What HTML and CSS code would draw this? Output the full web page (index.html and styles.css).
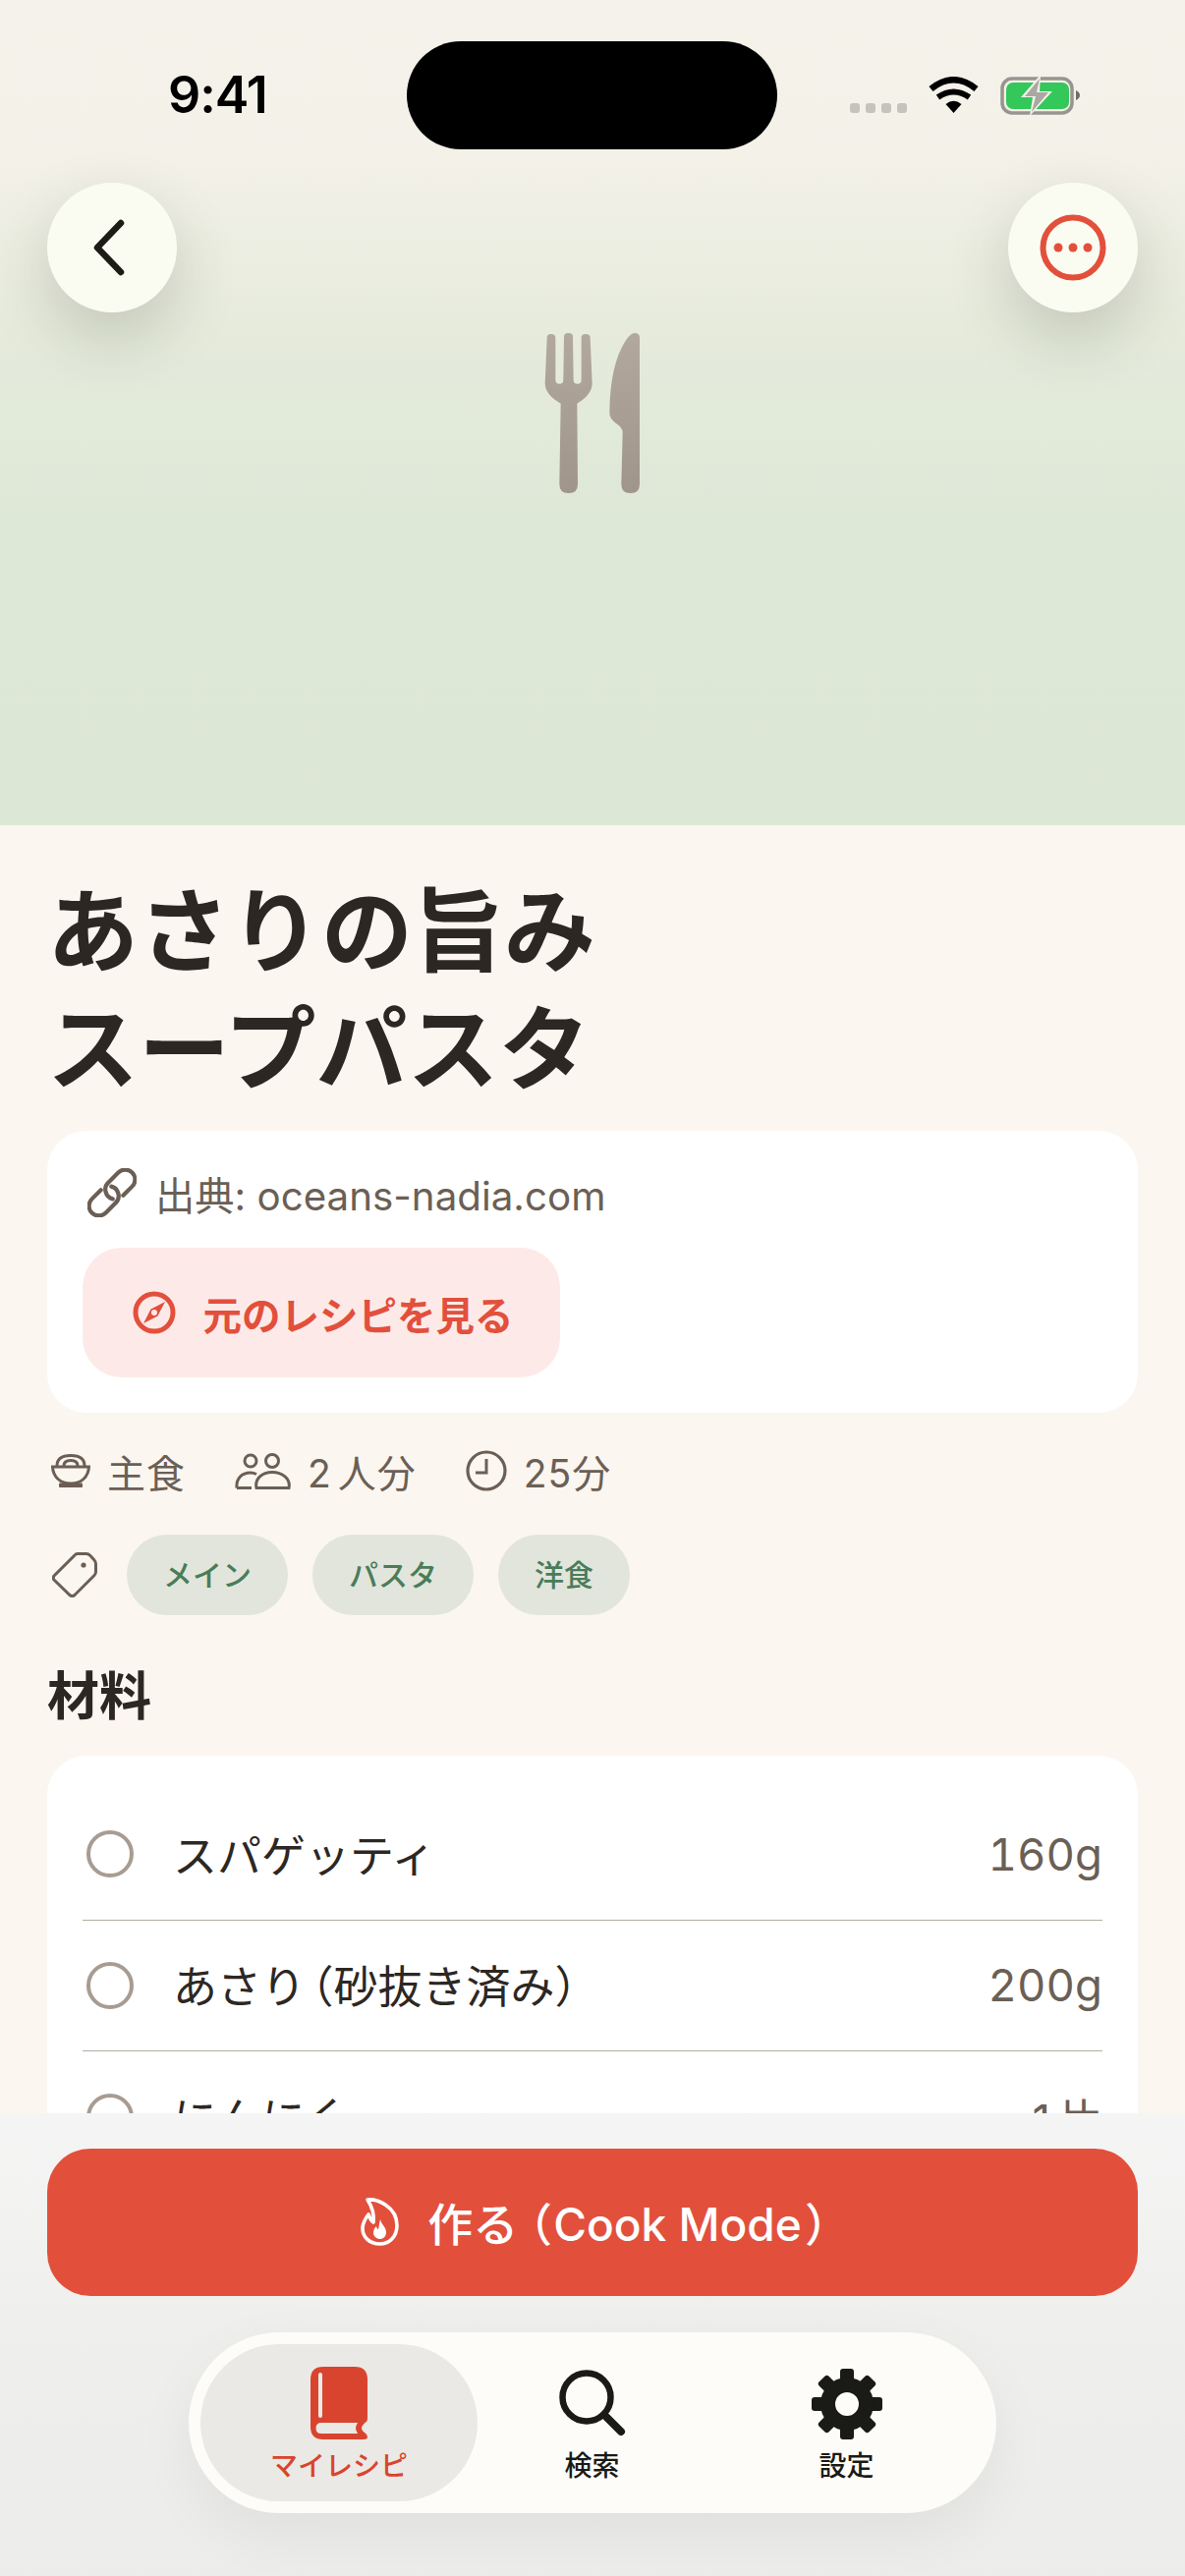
FILE: index.html
```html
<!DOCTYPE html>
<html lang="ja">
<head>
<meta charset="utf-8">
<title>あさりの旨みスープパスタ</title>
<link rel="stylesheet" href="styles.css">
</head>
<body>
<div class="screen">
  <header class="hero">
    <div class="status">
      <span class="time">9:41</span>
      <div class="island"></div>
      <div class="status-icons">
        <div class="signal"><i></i><i></i><i></i><i></i></div>
        <svg class="wifi" viewBox="0 0 51 37"><path d="M2.5 12.5Q25.5-6 48.5 12.5" fill="none" stroke="#000" stroke-width="6.5"/><path d="M9.5 21Q25.5 10 41.5 21" fill="none" stroke="#000" stroke-width="6"/><path d="M17.5 28Q25.5 21.5 33.5 28L25.5 37Z" fill="#000"/></svg>
        <svg class="battery" viewBox="0 0 82 42"><rect x="2" y="4" width="71" height="35" rx="10" fill="none" stroke="#979590" stroke-width="3.5"/><rect x="6" y="8" width="64" height="27" rx="7" fill="#34c759"/><path d="M77 16Q81 18 81 21Q81 24 77 26Z" fill="#6f6d69"/><path d="M41 0L21 23H33L30 42L53 17H40Z" fill="#f4f1ea"/><path d="M40 4L25 22H36L32 38L49 18H37Z" fill="#a9a8a3"/></svg>
      </div>
    </div>
    <div class="hero-actions">
      <button class="round-btn" aria-label="戻る"><svg class="chevron" viewBox="0 0 36 58"><path d="M30 4L6 29L30 54" fill="none" stroke="#1c1b16" stroke-width="6.5" stroke-linecap="round" stroke-linejoin="round"/></svg></button>
      <button class="round-btn" aria-label="その他"><svg class="more" viewBox="0 0 68 68"><circle cx="34" cy="34" r="30.5" fill="none" stroke="#e2503c" stroke-width="6"/><circle cx="19" cy="34" r="4.5" fill="#e2503c"/><circle cx="34" cy="34" r="4.5" fill="#e2503c"/><circle cx="49" cy="34" r="4.5" fill="#e2503c"/></svg></button>
    </div>
    <svg class="cutlery" viewBox="0 0 600 660">
      <defs><linearGradient id="cut" x1="0" y1="0" x2="0" y2="1"><stop offset="0" stop-color="#b2a89e"/><stop offset="1" stop-color="#a0958b"/></linearGradient></defs>
      <path fill="url(#cut)" d="M170 132Q170 120 182 120Q196 120 196 132L196 260Q196 272 208 272Q220 272 220 260L222 128Q222 117 235 117Q249 117 249 128L251 260Q251 272 263 272Q275 272 275 260L275 132Q275 120 288 120Q302 120 302 132L308 270Q308 305 262 332L264 578Q264 606 236 606Q208 606 208 578L212 332Q164 305 164 270Z"/>
      <path fill="url(#cut)" d="M453 132Q453 117 438 117Q425 117 410 140Q362 215 361 360Q361 378 380 392Q401 405 401 420L397 578Q397 606 425 606Q453 606 453 578Z"/>
    </svg>
  </header>

  <main class="content">
    <h1 class="title"><span class="title-line">あさりの旨み</span><span class="title-line">スープパスタ</span></h1>

    <section class="card source">
      <div class="source-line">
        <svg class="i-link" viewBox="0 0 50 50"><g transform="rotate(-45 25 25)" fill="none" stroke="#6b5f55" stroke-width="4.2" stroke-linecap="round"><path d="M19 15H6A10 10 0 0 0 6 35H20A10 10 0 0 0 29 20"/><path d="M31 35H44A10 10 0 0 0 44 15H30A10 10 0 0 0 21 30"/></g></svg>
        <span>出典: oceans-nadia.com</span>
      </div>
      <button class="source-btn">
        <svg class="i-compass" viewBox="0 0 44 44"><circle cx="22" cy="22" r="19" fill="none" stroke="#e2503c" stroke-width="5"/><path fill-rule="evenodd" fill="#e2503c" d="M33 11L25.5 25.5L11 33L18.5 18.5ZM22 19A3 3 0 1 0 22 25A3 3 0 1 0 22 19Z"/></svg>
        <span>元のレシピを見る</span>
      </button>
    </section>

    <div class="meta">
      <span class="meta-item"><svg class="i-bowl" viewBox="0 0 40 34"><g fill="none" stroke="#6b5f55" stroke-width="3"><path d="M1.5 13H38.5C38 23 31 30 20 30C9 30 2 23 1.5 13Z"/><path d="M6 12C6 4 12 1.5 20 1.5C28 1.5 34 4 34 12"/><path d="M13 12C13 8 16 6.5 20 6.5C24 6.5 27 8 27 12"/></g><rect x="8" y="29.5" width="24" height="4.5" rx="1" fill="#6b5f55"/></svg><span>主食</span></span>
      <span class="meta-item"><svg class="i-people" viewBox="0 0 57 37"><g fill="none" stroke="#6b5f55" stroke-width="3"><circle cx="16" cy="8" r="6"/><circle cx="38" cy="8" r="6.5"/><path d="M2 35.5C1 26 7 20 16 20C18 20 20 20.5 22 21.5"/><path d="M2 35.5H17"/><path d="M22 35.5C20 26 28 19.5 38 19.5C48 19.5 57 26 55 35.5Z"/></g></svg><span>2 人分</span></span>
      <span class="meta-item"><svg class="i-clock" viewBox="0 0 42 42"><circle cx="21" cy="21" r="19" fill="none" stroke="#6b5f55" stroke-width="3.2"/><path d="M21 9V23H10" fill="none" stroke="#6b5f55" stroke-width="3"/></svg><span>25分</span></span>
    </div>

    <div class="tags">
      <svg class="i-tag" viewBox="0 0 46 46"><path fill="none" stroke="#6b5f55" stroke-width="3" d="M23 3Q24 1.5 26 1.5H35Q37 1.5 39 3.5L43 8Q44.5 9.5 44.5 12V20Q44.5 22 43 23.5L23 43.5Q20.5 45.5 18 43.5L2 28Q0.5 26 2 24Z"/><circle cx="32" cy="13" r="2.6" fill="#6b5f55"/></svg>
      <span class="tag">メイン</span>
      <span class="tag">パスタ</span>
      <span class="tag">洋食</span>
    </div>

    <h2 class="section-title">材料</h2>

    <section class="card ingredients">
      <div class="row"><i class="check"></i><span class="name">スパゲッティ</span><span class="amount">160g</span></div>
      <div class="row"><i class="check"></i><span class="name">あさり<span class="paren-open">（</span>砂抜き済み<span class="paren-close">）</span></span><span class="amount">200g</span></div>
      <div class="row"><i class="check"></i><span class="name">にんにく</span><span class="amount">1片</span></div>
    </section>
  </main>

  <div class="dock">
    <button class="cook-btn">
      <svg class="i-flame" viewBox="0 0 40 50"><path fill="none" stroke="#fff" stroke-width="3.6" stroke-linejoin="round" d="M7 3C17 2 37 10 37 29C37 41 29 48 19.5 48C9 48 2 41 2 32C2 26 5 22 8 18C10 23 11 25 13 26C14 18 11 9 7 3Z"/><path fill="#fff" d="M20 23C21 28 26 31 26 36C26 40.5 23 43 19.5 43C16 43 13 40 13 36.5C13 33 15 31 16 30C16.5 32 17 33 18 33C19 30 19 26 20 23Z"/></svg>
      <span>作る<span class="cta-open">（</span>Cook Mode<span class="cta-close">）</span></span>
    </button>
    <nav class="tabbar">
      <div class="tab active">
        <svg class="i-book" viewBox="0 0 58 74"><path fill="#d9442e" d="M13 0H45Q58 0 58 13V52Q58 56 55.5 57Q52 60 52 62.5Q52 65 55 67Q58 69 58 71.5Q58 74 54 74H13Q0 74 0 61V13Q0 0 13 0Z"/><path fill="#ebe9e5" d="M11 57H48Q46 60 46 62.5Q46 65 48 68H11Q5.5 68 5.5 62.5Q5.5 57 11 57Z"/><rect x="8" y="6" width="4" height="46" rx="2" fill="#ebe9e5"/></svg>
        <span>マイレシピ</span>
      </div>
      <div class="tab">
        <svg class="i-search" viewBox="0 0 68 68"><circle cx="28" cy="28" r="24.5" fill="none" stroke="#1a1a16" stroke-width="6.5"/><path d="M46 46L63 63" stroke="#1a1a16" stroke-width="8" stroke-linecap="round"/></svg>
        <span>検索</span>
      </div>
      <div class="tab">
        <svg class="i-gear" viewBox="0 0 72 72"><g fill="#1a1a16"><rect x="29" y="0" width="14" height="18" rx="3"/><rect x="29" y="0" width="14" height="18" rx="3" transform="rotate(45 36 36)"/><rect x="29" y="0" width="14" height="18" rx="3" transform="rotate(90 36 36)"/><rect x="29" y="0" width="14" height="18" rx="3" transform="rotate(135 36 36)"/><rect x="29" y="0" width="14" height="18" rx="3" transform="rotate(180 36 36)"/><rect x="29" y="0" width="14" height="18" rx="3" transform="rotate(225 36 36)"/><rect x="29" y="0" width="14" height="18" rx="3" transform="rotate(270 36 36)"/><rect x="29" y="0" width="14" height="18" rx="3" transform="rotate(315 36 36)"/></g><circle cx="36" cy="36" r="19.5" fill="none" stroke="#1a1a16" stroke-width="15"/></svg>
        <span>設定</span>
      </div>
    </nav>
  </div>
</div>
</body>
</html>
```

FILE: styles.css
```css
* { box-sizing: border-box; }
html, body { margin: 0; padding: 0; background: #fbf6f0; }
body { font-family: Inter, "Noto Sans CJK JP", sans-serif; color: #2d2723; }
button { font: inherit; border: 0; padding: 0; cursor: pointer; }
svg { display: block; flex: none; }

.screen { position: relative; width: 1206px; height: 2622px; overflow: hidden; background: #fbf6f0; }

.hero { height: 840px; background: linear-gradient(180deg, #f5f2eb 0%, #f4f1e9 18%, #e6ebdc 40%, #dee8d7 62%, #dde7d5 100%); }
.status { display: flex; align-items: center; height: 152px; padding: 42px 48px 0 171px; }
.time { font-size: 52px; font-weight: 600; color: #000; letter-spacing: -1px; width: 243px; line-height: 110px; }
.island { width: 377px; height: 110px; border-radius: 55px; background: #000; }
.status-icons { display: flex; align-items: flex-end; margin-left: 74px; height: 42px; }
.signal { display: flex; gap: 6px; margin-bottom: 3px; }
.signal i { display: block; width: 10px; height: 10px; border-radius: 3px; background: #c4c3bc; }
.wifi { width: 51px; height: 37px; margin-left: 22px; margin-bottom: 3px; }
.battery { width: 82px; height: 42px; margin-left: 22px; }

.hero-actions { display: flex; justify-content: space-between; padding: 34px 48px 0; }
.round-btn { width: 132px; height: 132px; border-radius: 50%; background: #fafcf1; display: flex; align-items: center; justify-content: center; box-shadow: 0 26px 64px rgba(50, 55, 40, .2); }
.chevron { width: 36px; height: 58px; margin-right: 6px; }
.more { width: 68px; height: 68px; }

.cutlery { width: 200px; height: 220px; margin: -18px 0 0 500px; }

.content { padding: 42px 48px 0; }
.title { margin: 0; font-family: "Noto Sans CJK JP", sans-serif; font-size: 93px; font-weight: 700; color: #2d2723; }
.title-line { display: block; height: 120px; line-height: 120px; }

.card { background: #fff; border-radius: 40px; }
.source { height: 287px; margin-top: 29px; padding: 33px 36px 0; display: flex; flex-direction: column; align-items: flex-start; }
.source-line { display: flex; align-items: center; gap: 19px; height: 60px; padding-left: 5px; font-size: 40.3px; color: #6b5f55; }
.i-link { width: 50px; height: 50px; }
.source-btn { margin-top: 26px; width: 486px; height: 132px; padding-left: 3px; border-radius: 40px; background: #fdeae8; color: #e2503c; display: flex; align-items: center; justify-content: center; gap: 28px; font-family: "Noto Sans CJK JP", sans-serif; font-size: 39.5px; font-weight: 700; }
.i-compass { width: 44px; height: 44px; }

.meta { display: flex; gap: 50px; align-items: center; margin-top: 33px; height: 52px; font-size: 39px; letter-spacing: 1px; word-spacing: -6px; color: #6b5f55; padding-left: 4px; }
.meta-item { display: flex; align-items: center; gap: 17px; }
.i-bowl { width: 40px; height: 34px; }
.i-people { width: 57px; height: 37px; }
.i-clock { width: 42px; height: 42px; }

.tags { display: flex; align-items: center; gap: 25px; margin-top: 39px; padding-left: 5px; }
.i-tag { width: 46px; height: 46px; margin-right: 5px; }
.tag { display: flex; align-items: center; justify-content: center; height: 82px; padding: 0 37px 5px; border-radius: 41px; background: #e2e5dc; color: #4a7c59; font-family: "Noto Sans CJK JP", sans-serif; font-size: 30px; font-weight: 500; }

.section-title { margin: 45px 0 0; font-family: "Noto Sans CJK JP", sans-serif; font-size: 53px; line-height: 68px; font-weight: 700; color: #2d2723; }

.ingredients { margin-top: 30px; padding: 34px 36px 0; }
.row { display: flex; align-items: center; height: 133.5px; border-bottom: 1px solid #b3ada3; }
.row:last-child { border-bottom: 0; }
.check { display: block; width: 48px; height: 48px; border-radius: 50%; border: 4px solid #a89c92; margin-left: 4px; }
.name { margin-left: 40px; padding-bottom: 2px; flex: 1; font-family: "Noto Sans CJK JP", sans-serif; font-size: 45px; color: #2d2723; }
.paren-open { font-feature-settings: "halt"; margin-left: 6px; }
.paren-close { font-feature-settings: "halt"; }
.amount { font-size: 45.5px; font-feature-settings: "tnum"; color: #6b5f55; }

.dock { position: absolute; left: 0; right: 0; bottom: 0; height: 471px; padding: 36px 48px 0; background: linear-gradient(180deg, #f5f5f5 0%, #efefed 45%, #ececea 100%); display: flex; flex-direction: column; align-items: center; }
.cook-btn { width: 1110px; height: 150px; flex: none; padding: 0 0 2px 5px; border-radius: 44px; background: #e2503c; color: #fff; display: flex; align-items: center; justify-content: center; gap: 28px; font-size: 46px; font-weight: 500; font-family: Inter, "Noto Sans CJK JP", sans-serif; }
.cta-open { font-feature-settings: "palt"; margin: 0 3px 0 10px; }
.cta-close { font-feature-settings: "palt"; margin-left: 5px; }
.i-flame { width: 40px; height: 50px; }
.tabbar { margin-top: 37px; width: 822px; height: 184px; padding: 12px; border-radius: 92px; background: #fdfcf9; display: flex; align-items: stretch; box-shadow: 0 20px 60px rgba(0, 0, 0, .06); }
.tab { width: 259px; display: flex; flex-direction: column; align-items: center; justify-content: flex-end; gap: 7px; padding-bottom: 20px; font-family: "Noto Sans CJK JP", sans-serif; font-size: 28px; font-weight: 500; line-height: 36px; color: #1a1a16; }
.tab.active { width: 282px; flex: none; border-radius: 80px; background: #ebe9e5; color: #d9442e; }
.tab.active + .tab { margin-left: -13px; }
.i-book { width: 58px; height: 74px; }
.i-search { width: 68px; height: 68px; margin-bottom: 3px; }
.i-gear { width: 72px; height: 72px; }
```
